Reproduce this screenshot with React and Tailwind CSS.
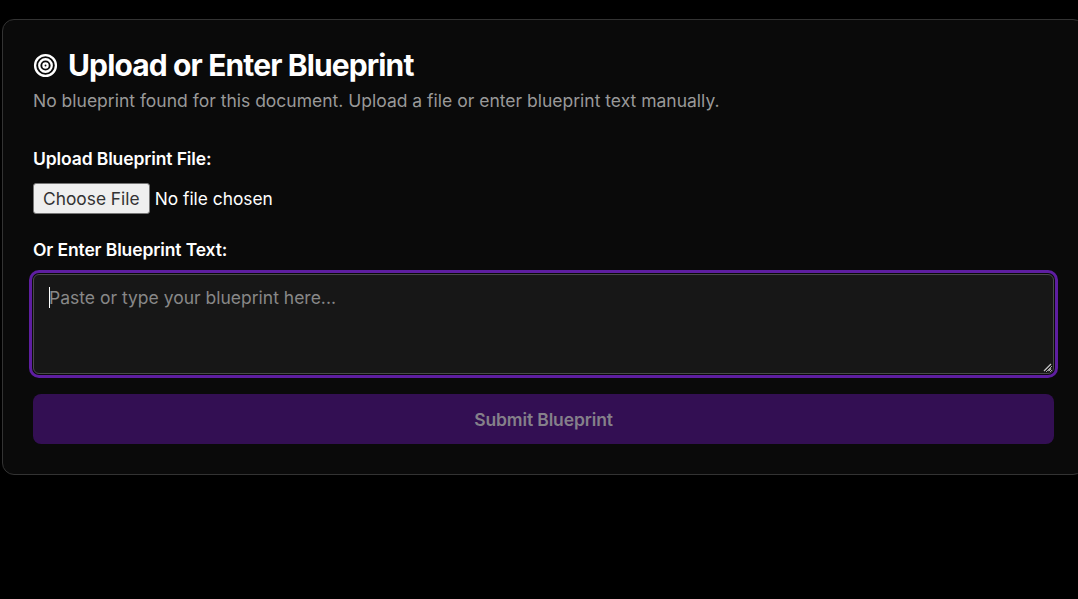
import React, { useState } from 'react';
import { Target } from 'lucide-react';

const App = () => {
  const [text, setText] = useState('');

  return (
    <div className="min-h-screen bg-black overflow-hidden pt-[19px] pl-[2px] font-['Inter',sans-serif] text-[17.5px]">
      <div className="w-[1083px] bg-[#0a0a0a] border border-[#333333] rounded-xl p-[30px] text-white">
        <div className="flex items-center gap-[10px] h-[30px]">
          <Target className="w-[25px] h-[25px] shrink-0" strokeWidth={2.2} />
          <h2 className="text-3xl font-bold tracking-[-0.029em]">Upload or Enter Blueprint</h2>
        </div>
        <p className="mt-[9px] text-[#999999] leading-6">
          No blueprint found for this document. Upload a file or enter blueprint text manually.
        </p>

        <div className="mt-[34px]">
          <label className="block font-semibold tracking-[-0.12px] leading-6 mb-3">Upload Blueprint File:</label>
          <input type="file" className="block h-[31px] text-[17.35px] text-white file:bg-[#efefef] file:text-[#333333] file:border file:border-[#767676] file:rounded-[3px] file:px-[9px] file:pt-px file:h-[31px] file:mr-[5px]" />
        </div>

        <div className="mt-6">
          <label className="block font-semibold tracking-[-0.12px] leading-6 mb-3">Or Enter Blueprint Text:</label>
          <div className="relative">
            <textarea
              autoFocus
              value={text}
              onChange={(e) => setText(e.target.value)}
              placeholder="Paste or type your blueprint here..."
              className="block w-full h-[100px] bg-[#171717] border border-[#4a4a4a] rounded-md pl-[15px] pr-4 pt-[10px] pb-3 text-white placeholder:text-[#888888] caret-transparent outline-none ring-[3px] ring-[#5e1ea0] ring-offset-1 ring-offset-[#0a0a0a]"
            />
            {/* caret is frozen on in the reference */}
            <span className="absolute left-4 top-[13px] w-px h-[21px] bg-white pointer-events-none" />
            <svg className="absolute right-[2px] bottom-[2px] pointer-events-none" width="9" height="9" viewBox="0 0 9 9" fill="none" stroke="#c4c4c4" strokeWidth="1.2">
              <path d="M1 8 8 1" />
              <path d="M5.5 8 8 5.5" />
            </svg>
          </div>
        </div>

        <button
          disabled
          className="mt-5 w-full h-[50px] pt-0.5 bg-[#330f53] text-[#85808a] rounded-lg font-semibold tracking-[-0.12px]"
        >
          Submit Blueprint
        </button>
      </div>
    </div>
  );
};

export default App;
